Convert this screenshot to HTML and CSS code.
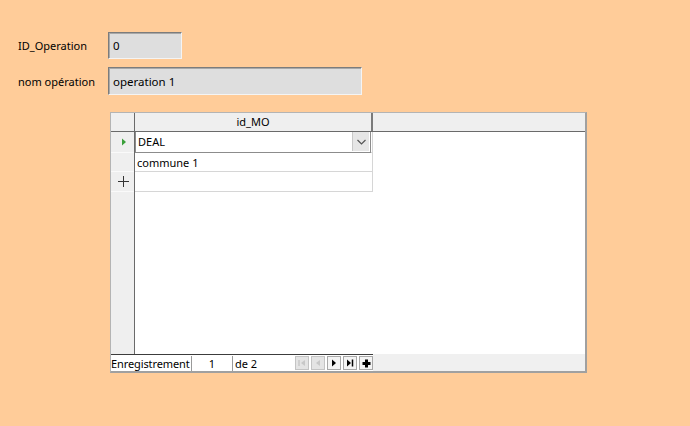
FILE: index.html
```html
<!DOCTYPE html>
<html lang="fr">
<head>
<meta charset="utf-8">
<link rel="stylesheet" href="styles.css">
</head>
<body>
<div class="form">
  <div class="field-row">
    <span class="label">ID_Operation</span>
    <div class="input input-id">0</div>
  </div>
  <div class="field-row">
    <span class="label">nom opération</span>
    <div class="input input-nom">operation 1</div>
  </div>
  <div class="grid">
    <div class="grid-head">
      <div class="corner"></div>
      <div class="col-head">id_MO</div>
      <div class="col-rest"></div>
    </div>
    <div class="grid-body">
      <div class="row-headers">
        <div class="rh rh1"><svg width="6" height="8" viewBox="0 0 6 8"><path d="M1 0.5 L5 4 L1 7.5 Z" fill="#3aa03a"/></svg></div>
        <div class="rh rh2"></div>
        <div class="rh rh3"><svg width="11" height="11" viewBox="0 0 11 11"><path d="M5.5 0 V11 M0 5.5 H11" stroke="#333" stroke-width="1"/></svg></div>
      </div>
      <div class="data-col">
        <div class="cell cell1">
          <div class="combo">
            <span class="combo-text">DEAL</span>
            <span class="combo-btn"><svg width="9" height="6" viewBox="0 0 9 6"><path d="M0.5 1 L4.5 5 L8.5 1" fill="none" stroke="#555" stroke-width="1.2"/></svg></span>
          </div>
        </div>
        <div class="cell cell2">commune 1</div>
        <div class="cell cell3"></div>
      </div>
    </div>
    <div class="grid-foot">
      <div class="nav">
        <span class="nav-label">Enregistrement</span>
        <span class="nav-num">1</span>
        <span class="nav-of">de 2</span>
        <span class="nav-btns">
          <span class="btn disabled"><svg width="8" height="8" viewBox="0 0 8 8"><path d="M1 1 V7" stroke="#c8c8c8" stroke-width="1.5"/><path d="M7 1 L3 4 L7 7 Z" fill="#c8c8c8"/></svg></span>
          <span class="btn disabled"><svg width="8" height="8" viewBox="0 0 8 8"><path d="M6 1 L2 4 L6 7 Z" fill="#c8c8c8"/></svg></span>
          <span class="btn"><svg width="8" height="8" viewBox="0 0 8 8"><path d="M2 0.5 L6 4 L2 7.5 Z" fill="#000"/></svg></span>
          <span class="btn"><svg width="8" height="8" viewBox="0 0 8 8"><path d="M1 0.5 L5 4 L1 7.5 Z" fill="#000"/><path d="M6.5 0.5 V7.5" stroke="#000" stroke-width="1.5"/></svg></span>
          <span class="btn"><svg width="9" height="9" viewBox="0 0 9 9"><path d="M3 0.5 H6 V3 H8.5 V6 H6 V8.5 H3 V6 H0.5 V3 H3 Z" fill="#000"/></svg></span>
        </span>
      </div>
      <div class="foot-rest"></div>
    </div>
  </div>
</div>
</body>
</html>
```

FILE: styles.css
```css
html, body {
  margin: 0;
  padding: 0;
  background: #ffcc99;
}
body {
  font-family: "Noto Sans", "Open Sans", sans-serif;
  font-size: 11px;
  color: #000;
}
.form {
  padding: 32px 0 0 18px;
}
.field-row {
  display: flex;
  align-items: center;
  margin-bottom: 8px;
}
.label {
  width: 90px;
  flex: none;
}
.input {
  box-sizing: border-box;
  background: #dedede;
  border: 1px solid;
  border-color: #7c7c7c #f4f4f4 #f4f4f4 #7c7c7c;
  box-shadow: inset 1px 1px 0 #a8a8a8;
  padding: 0 0 0 4px;
  display: flex;
  align-items: center;
  font-size: 11.5px;
}
.input-id {
  width: 74px;
  height: 27px;
}
.input-nom {
  width: 254px;
  height: 28px;
}
.grid {
  margin: 17px 0 0 92px;
  width: 477px;
  height: 261px;
  box-sizing: border-box;
  background: #fff;
  border: 1px solid #b4b4b4;
  border-right: 2px solid #a0a0a0;
  border-bottom: 2px solid #a0a0a0;
  display: flex;
  flex-direction: column;
}
.grid-head {
  display: flex;
  height: 19px;
  flex: none;
  background: #efefef;
  border-bottom: 1px solid #6a6a6a;
  box-sizing: border-box;
}
.corner {
  width: 23px;
  border-right: 1px solid #6a6a6a;
}
.col-head {
  width: 236px;
  border-right: 2px solid #7a7a7a;
  text-align: center;
  line-height: 18px;
}
.col-rest {
  flex: 1;
}
.grid-body {
  flex: 1;
  display: flex;
  min-height: 0;
}
.row-headers {
  width: 23px;
  flex: none;
  background: #efefef;
  border-right: 1px solid #6a6a6a;
}
.rh {
  box-sizing: border-box;
  border-bottom: 1px solid #fafafa;
  display: flex;
  align-items: center;
  justify-content: center;
}
.rh1 { height: 21px; padding-left: 3px; }
.rh2 { height: 19px; }
.rh3 { height: 20px; padding-left: 1px; }
.data-col {
  width: 238px;
  flex: none;
}
.cell {
  box-sizing: border-box;
  border-bottom: 1px solid #d6d6d6;
  border-right: 1px solid #d6d6d6;
  display: flex;
  align-items: center;
}
.cell1 { height: 21px; }
.cell2 { height: 19px; padding-left: 2px; }
.cell3 { height: 20px; }
.combo {
  box-sizing: border-box;
  width: 236px;
  height: 21px;
  border: 1px solid #8c8c8c;
  border-top: 0;
  display: flex;
  align-items: center;
  background: #fff;
}
.combo-text {
  flex: 1;
  padding-left: 2px;
}
.combo-btn {
  width: 16px;
  height: 19px;
  background: #e6e6e6;
  border-left: 1px solid #c8c8c8;
  display: flex;
  align-items: center;
  justify-content: center;
  margin-right: 1px;
}
.grid-foot {
  height: 17px;
  flex: none;
  display: flex;
  background: #f0f0f0;
}
.nav {
  width: 262px;
  display: flex;
  align-items: center;
  background: #fff;
  border-top: 1px solid #3c3c3c;
  box-sizing: border-box;
  font-size: 11px;
}
.nav-label {
  width: 80px;
  flex: none;
  border-right: 1px solid #9a9a9a;
  line-height: 15px;
  white-space: nowrap;
  letter-spacing: -0.1px;
}
.nav-num {
  width: 40px;
  flex: none;
  text-align: center;
  border-right: 1px solid #9a9a9a;
  line-height: 15px;
}
.nav-of {
  width: 60px;
  flex: none;
  padding-left: 2px;
  box-sizing: border-box;
  line-height: 15px;
}
.nav-btns {
  display: flex;
  gap: 2px;
  padding-left: 2px;
}
.btn {
  box-sizing: border-box;
  width: 14px;
  height: 14px;
  border: 1px solid #a8a8a8;
  background: #f4f4f4;
  display: flex;
  align-items: center;
  justify-content: center;
}
.btn.disabled {
  background: #e4e4e4;
  border-color: #c4c4c4;
}
.foot-rest {
  flex: 1;
}
```
